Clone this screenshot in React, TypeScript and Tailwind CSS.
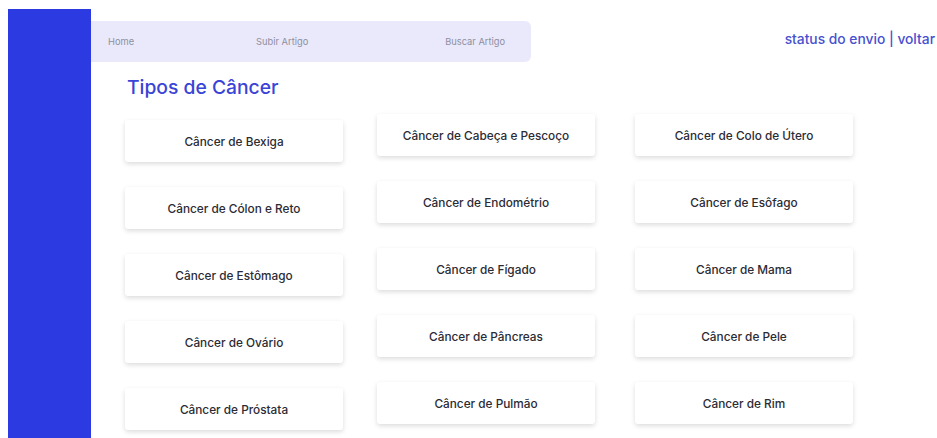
import React from 'react';

const columns: string[][] = [
    ['Câncer de Bexiga', 'Câncer de Cólon e Reto', 'Câncer de Estômago', 'Câncer de Ovário', 'Câncer de Próstata'],
    ['Câncer de Cabeça e Pescoço', 'Câncer de Endométrio', 'Câncer de Fígado', 'Câncer de Pâncreas', 'Câncer de Pulmão'],
    ['Câncer de Colo de Útero', 'Câncer de Esôfago', 'Câncer de Mama', 'Câncer de Pele', 'Câncer de Rim'],
];

function CancerCard({ label }: { label: string }) {
    return (
        <a
            href="#"
            className="flex h-[42px] w-[218px] items-center justify-center rounded-[3px] bg-white pt-[3px] text-[11.8px] font-medium text-[#2b2b35] shadow-[0_2px_5px_rgba(0,0,0,0.14)]"
        >
            {label}
        </a>
    );
}

export default function App() {
    return (
        <div
            className="flex min-h-screen bg-white pl-2 pt-[9px]"
            style={{ fontFamily: 'Inter, "Noto Sans", sans-serif' }}
        >
            {/* barra lateral */}
            <aside className="w-[83px] shrink-0 bg-[#2c3ae2]" />

            <main className="flex flex-1 flex-col">
                <header className="flex items-start">
                    <nav className="mt-3 flex h-[41px] w-[440px] items-center rounded-r-md bg-[#e9e9fb] pl-[17px] text-[9.3px] text-[#8f8f9e]">
                        <a href="#">Home</a>
                        <a href="#" className="ml-[122px]">Subir Artigo</a>
                        <a href="#" className="ml-[137px]">Buscar Artigo</a>
                    </nav>
                    <div className="ml-auto mr-[2px] mt-[24px] text-[13.8px] font-medium leading-none text-[#4750cf]">
                        <a href="#">status do envio</a> | <a href="#">voltar</a>
                    </div>
                </header>

                <section className="pl-[34px]">
                    <h1 className="mt-[13px] pl-[2px] text-[19.3px] font-medium leading-6 text-[#3a44d6]">
                        Tipos de Câncer
                    </h1>

                    <div className="mt-[15px] flex">
                        <div className="flex flex-col gap-[25px] pt-[6px]">
                            {columns[0].map((c) => <CancerCard key={c} label={c} />)}
                        </div>
                        <div className="ml-[34px] flex flex-col gap-[25px]">
                            {columns[1].map((c) => <CancerCard key={c} label={c} />)}
                        </div>
                        <div className="ml-[40px] flex flex-col gap-[25px]">
                            {columns[2].map((c) => <CancerCard key={c} label={c} />)}
                        </div>
                    </div>
                </section>
            </main>
        </div>
    );
}
